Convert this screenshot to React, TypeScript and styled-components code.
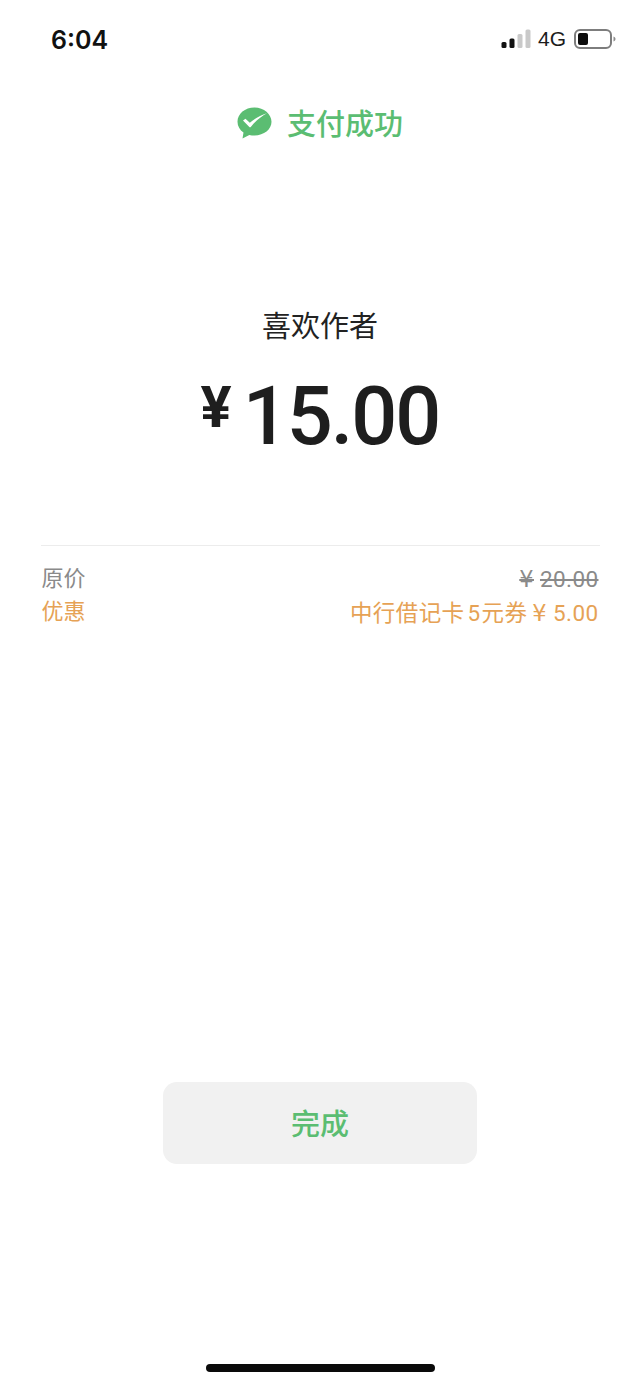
import React from 'react';
import styled, { createGlobalStyle } from 'styled-components';

const GlobalStyle = createGlobalStyle`
  html, body {
    margin: 0;
    padding: 0;
    background: #fff;
  }
`;

const CJK = `'Noto Sans CJK SC', 'Noto Sans', sans-serif`;
const LATIN = `Roboto, 'Noto Sans CJK SC', sans-serif`;
const GREEN = '#5bbd72';
const ORANGE = '#e6a255';

const Page = styled.div`
  width: 640px;
  height: 1386px;
  display: flex;
  flex-direction: column;
  align-items: center;
  background: #fff;
  overflow: hidden;
`;

const StatusBar = styled.div`
  width: 100%;
  box-sizing: border-box;
  height: 78px;
  padding: 0 24px 0 51px;
  display: flex;
  justify-content: space-between;
  align-items: center;
`;

const Time = styled.div`
  margin-top: 2px;
  font-family: Inter, Roboto, sans-serif;
  font-size: 25px;
  font-weight: 600;
  color: #111;
`;

const StatusIcons = styled.div`
  display: flex;
  align-items: center;
  gap: 7px;
`;

const Carrier = styled.span`
  font-family: 'Liberation Sans', sans-serif;
  font-size: 21px;
  color: #1c1c1c;
`;

const BatteryIcon = styled.svg`
  margin-left: 1px;
`;

const Title = styled.div`
  margin-top: 18px;
  display: flex;
  align-items: center;
  gap: 15px;
  font-family: ${CJK};
  font-size: 29px;
  font-weight: 500;
  line-height: 52px;
  color: ${GREEN};
`;

const TitleIcon = styled.svg`
  margin-top: 2px;
`;

const Subject = styled.div`
  margin-top: 154px;
  font-family: ${CJK};
  font-size: 29px;
  line-height: 44px;
  color: #222;
`;

const Amount = styled.div`
  margin-top: 21px;
  display: flex;
  align-items: baseline;
  color: #1e1e1e;
`;

const Yen = styled.span`
  font-family: Roboto, sans-serif;
  font-size: 58px;
  font-weight: 700;
  margin-right: 11px;
  position: relative;
  top: -17px;
`;

const Figure = styled.span`
  font-family: Roboto, sans-serif;
  font-size: 81px;
  font-weight: 500;
  line-height: 100px;
  letter-spacing: -2px;
`;

const Details = styled.div`
  width: 559px;
  margin-top: 78px;
  padding-top: 14px;
  border-top: 1px solid #ececec;
  display: flex;
  flex-direction: column;
`;

const Row = styled.div<{ $tone: string }>`
  display: flex;
  justify-content: space-between;
  padding: 0 1px 0 1px;
  font-family: ${CJK};
  font-size: 22px;
  line-height: 33px;
  color: ${p => p.$tone};
`;

const Value = styled.span<{ $struck?: boolean }>`
  position: relative;
  top: ${p => (p.$struck ? '3px' : '4px')};
  padding-left: ${p => (p.$struck ? '3px' : '0')};
  font-family: ${LATIN};
  font-size: 22.5px;
  letter-spacing: 0.4px;
  text-decoration: ${p => (p.$struck ? 'line-through' : 'none')};
`;

const CouponDigit = styled.span`
  margin: 0 1px 0 3px;
`;

const CurrencyMark = styled.span`
  font-family: 'DejaVu Sans', sans-serif;
  margin: 0 6px 0 5px;
`;

const Spacer = styled.div`
  flex-grow: 1;
`;

const DoneButton = styled.div`
  width: 314px;
  height: 82px;
  box-sizing: border-box;
  padding-bottom: 3px;
  border-radius: 14px;
  background: #f1f1f1;
  display: flex;
  align-items: center;
  justify-content: center;
  font-family: ${CJK};
  font-size: 29px;
  font-weight: 500;
  color: ${GREEN};
`;

const HomeIndicator = styled.div`
  width: 229px;
  height: 8px;
  border-radius: 4px;
  background: #0a0a0a;
  margin-top: 200px;
  margin-bottom: 14px;
`;

const Signal = () => (
  <svg width="30" height="20" viewBox="0 0 30 20">
    <rect x="0.5" y="13" width="5" height="6" rx="1.5" fill="#111" />
    <rect x="8.5" y="9.5" width="5" height="9.5" rx="1.5" fill="#111" />
    <rect x="16.5" y="5" width="5" height="14" rx="1.5" fill="#c9c9c9" />
    <rect x="24.5" y="0.5" width="5" height="18.5" rx="1.5" fill="#c9c9c9" />
  </svg>
);

const Battery = () => (
  <BatteryIcon width="42" height="20" viewBox="0 0 42 20">
    <rect x="1" y="1" width="36" height="18" rx="5" fill="none" stroke="#7d7d7d" strokeWidth="2" />
    <rect x="4" y="4" width="10" height="12" rx="2" fill="#0c0c0c" />
    <path d="M39.5 7.5c1.4.5 2 1.4 2 2.5s-.6 2-2 2.5z" fill="#8c8c8c" />
  </BatteryIcon>
);

const WeChatPay = () => (
  <TitleIcon width="35" height="32" viewBox="0 0 35 32">
    <path
      d="M17.5 0.5C8 0.5 0.5 6.7 0.5 14.8c0 4.4 2.3 8.2 6 10.8L5.5 31.5l6.8-3.6c1.6.4 3.4.6 5.2.6 9.5 0 17-6.2 17-13.7S27 .5 17.5.5z"
      fill={GREEN}
    />
    <path
      d="M6 13.5l2.5-1.7 4.3 4c4.4-3.9 10.2-7.4 17.200-9.600-6 3.300-11.200 7.600-16 13.500-.6.700-1.300.700-1.900 0z"
      fill="#fff"
    />
  </TitleIcon>
);

const App = () => (
  <Page>
    <GlobalStyle />
    <StatusBar>
      <Time>6:04</Time>
      <StatusIcons>
        <Signal />
        <Carrier>4G</Carrier>
        <Battery />
      </StatusIcons>
    </StatusBar>
    <Title>
      <WeChatPay />
      支付成功
    </Title>
    <Subject>喜欢作者</Subject>
    <Amount>
      <Yen>¥</Yen>
      <Figure>15.00</Figure>
    </Amount>
    <Details>
      <Row $tone="#8a8a8a">
        <span>原价</span>
        <Value $struck>
          <CurrencyMark>¥</CurrencyMark>20.00
        </Value>
      </Row>
      <Row $tone={ORANGE}>
        <span>优惠</span>
        <Value>
          中行借记卡<CouponDigit>5</CouponDigit>元券<CurrencyMark>¥</CurrencyMark>5.00
        </Value>
      </Row>
    </Details>
    <Spacer />
    <DoneButton>完成</DoneButton>
    <HomeIndicator />
  </Page>
);

export default App;
